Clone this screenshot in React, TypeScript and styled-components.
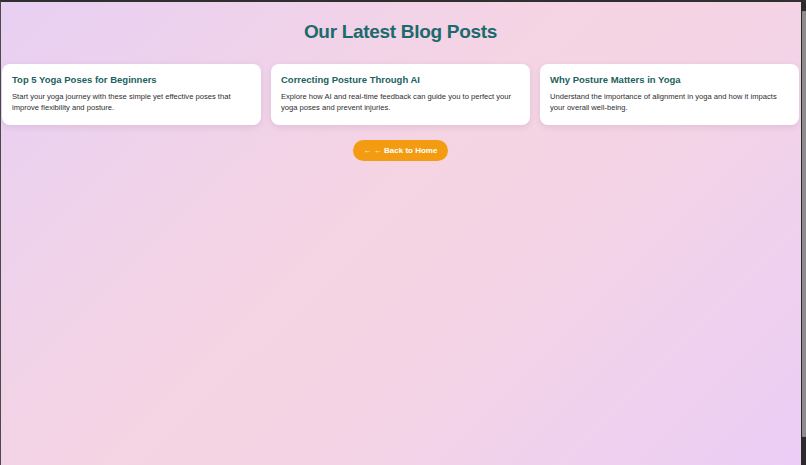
import styled, { createGlobalStyle } from 'styled-components';

const GlobalStyle = createGlobalStyle`
    html, body {
        margin: 0;
        padding: 0;
        height: 100%;
        overflow: hidden;
    }
    #root {
        height: 100%;
    }
    * {
        box-sizing: border-box;
    }
`;

const Frame = styled.div`
    display: flex;
    height: 100vh;
    border-top: 2px solid #2f2f2f;
    border-left: 1px solid #4a4a4a;
    background: #2b2b2b;
`;

const Page = styled.main`
    flex: 1;
    display: flex;
    flex-direction: column;
    align-items: center;
    padding: 19px 2px 0 1px;
    background: linear-gradient(135deg, #e8d0f3 0%, #f5d4e3 45%, #f4d4e4 60%, #ebcdf6 100%);
    font-family: "Liberation Sans", Arial, sans-serif;
`;

const Heading = styled.h1`
    margin: 0 0 20px;
    font-size: 19px;
    line-height: 1.2;
    letter-spacing: -0.3px;
    font-weight: 700;
    color: #1b6a6c;
`;

const PostGrid = styled.section`
    display: grid;
    grid-template-columns: repeat(3, 1fr);
    gap: 10px;
    width: 100%;
`;

const Card = styled.article`
    background: #ffffff;
    border-radius: 8px;
    padding: 10px 10px 12px;
    box-shadow: 0 2px 6px rgba(90, 60, 100, 0.12);
`;

const CardTitle = styled.h2`
    margin: 0 0 6px;
    font-size: 9.5px;
    line-height: 1.2;
    font-weight: 700;
    color: #1d5f60;
`;

const CardText = styled.p`
    margin: 0;
    font-size: 7.6px;
    line-height: 11px;
    color: #2e2e2e;
`;

const HomeButton = styled.button`
    margin-top: 15px;
    height: 21px;
    padding: 0 11px;
    border: none;
    border-radius: 11px;
    background: #f39c12;
    color: #ffffff;
    font-family: "Liberation Sans", Arial, sans-serif;
    font-size: 8px;
    font-weight: 700;
    cursor: pointer;
`;

const ScrollTrack = styled.div`
    width: 5px;
    display: flex;
    flex-direction: column;
    padding: 9px 0 28px 1px;
    background: #2b2b2b;
`;

const ScrollThumb = styled.div`
    flex: 1;
    background: #8c8c8c;
    border-radius: 1px;
`;

const posts = [
    {
        title: 'Top 5 Yoga Poses for Beginners',
        text: 'Start your yoga journey with these simple yet effective poses that improve flexibility and posture.',
    },
    {
        title: 'Correcting Posture Through AI',
        text: 'Explore how AI and real-time feedback can guide you to perfect your yoga poses and prevent injuries.',
    },
    {
        title: 'Why Posture Matters in Yoga',
        text: 'Understand the importance of alignment in yoga and how it impacts your overall well-being.',
    },
];

export default function App() {
    return (
        <>
            <GlobalStyle/>
            <Frame>
                <Page>
                    <Heading>Our Latest Blog Posts</Heading>
                    <PostGrid>
                        {posts.map(post => (
                            <Card key={post.title}>
                                <CardTitle>{post.title}</CardTitle>
                                <CardText>{post.text}</CardText>
                            </Card>
                        ))}
                    </PostGrid>
                    <HomeButton>← ← Back to Home</HomeButton>
                </Page>
                <ScrollTrack>
                    <ScrollThumb/>
                </ScrollTrack>
            </Frame>
        </>
    );
}
